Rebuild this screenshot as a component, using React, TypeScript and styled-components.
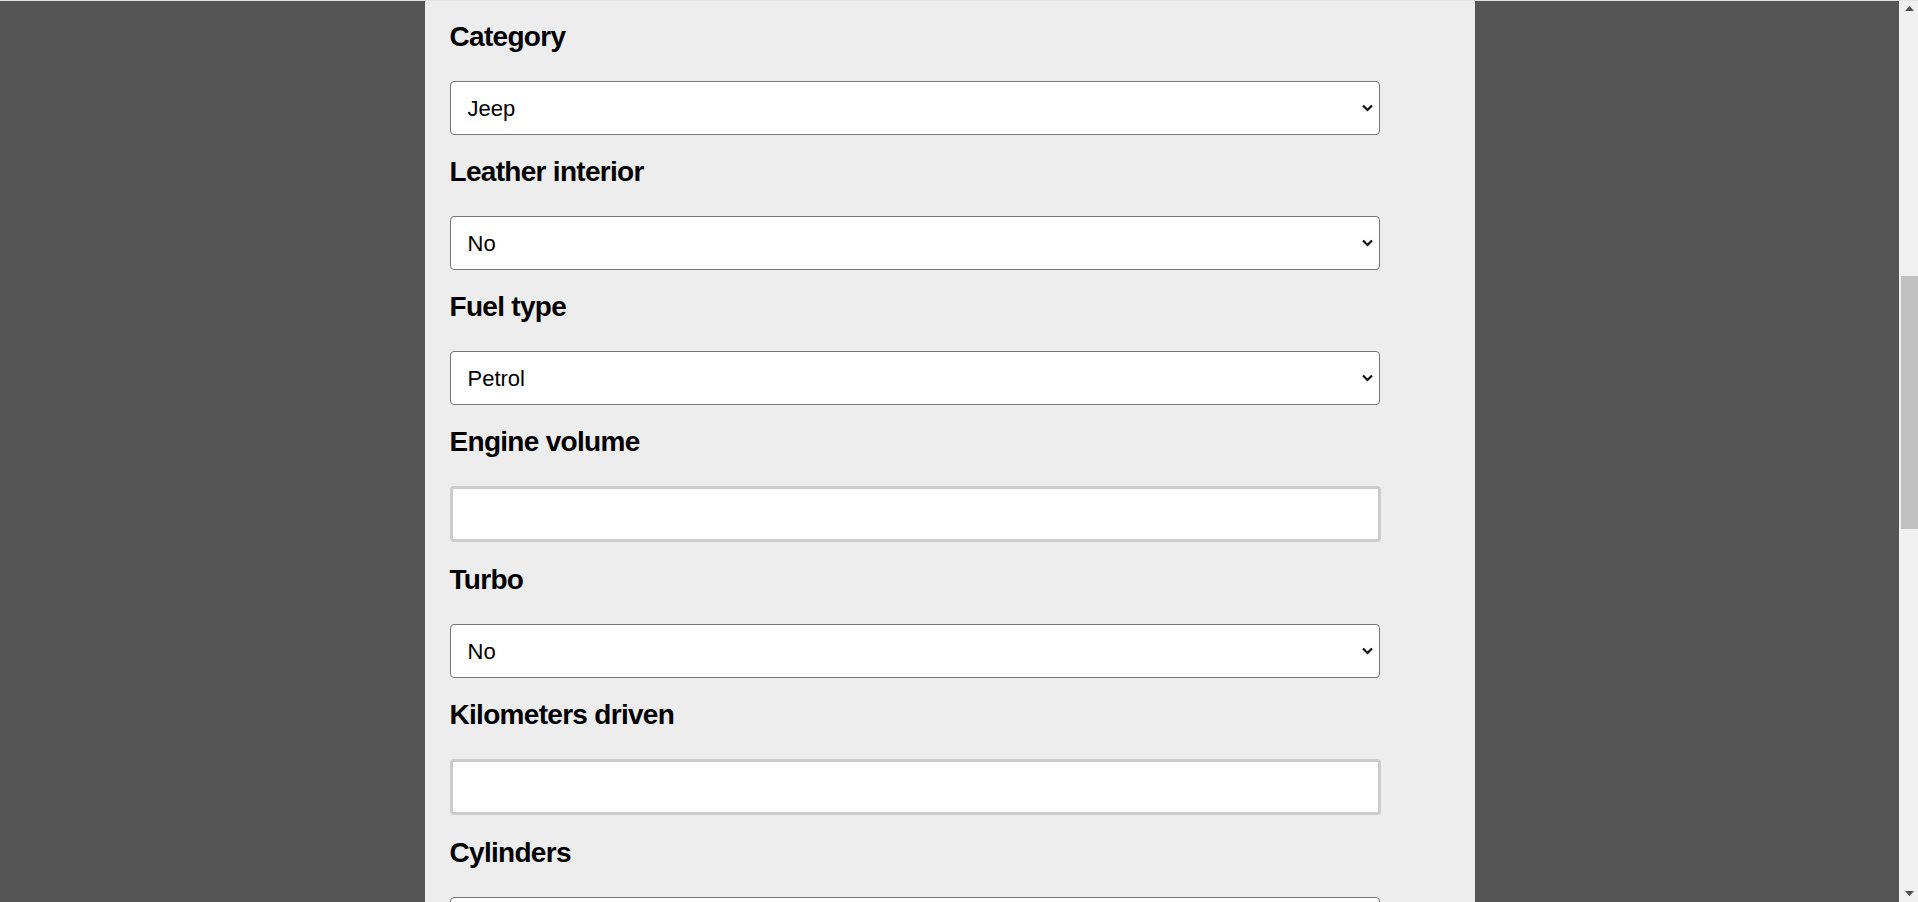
import React, { useEffect, useRef } from 'react';
import styled, { createGlobalStyle } from 'styled-components';

// Car price form, page is scrolled down to the "Category" field

const BAR = 19;

const GlobalStyle = createGlobalStyle`
    html, body {
        margin: 0;
        padding: 0;
        background-color: #555555;
        font-family: "Liberation Sans", Arial, sans-serif;
    }
`;

const Page = styled.div`
    min-height: 100vh;
    padding-right: ${BAR}px;
    background-color: #555555;
`;

const TopEdge = styled.div`
    position: fixed;
    top: 0;
    left: 0;
    right: 0;
    height: 1px;
    background-color: #e3e3e3;
    z-index: 11;
`;

const Panel = styled.form`
    width: 1050px;
    box-sizing: border-box;
    margin: 0 auto;
    padding: 0 25px 240px;
    background-color: #ededed;
`;

const Header = styled.div`
    padding: 48px 0 225px;
`;

const Title = styled.h1`
    margin: 0 0 20px;
    font-size: 40px;
    line-height: 48px;
    color: #111;
`;

const Intro = styled.p`
    margin: 0;
    font-size: 20px;
    line-height: 30px;
    color: #333;
`;

const Field = styled.div`
    display: flex;
    flex-direction: column;
    align-items: flex-start;
`;

const Label = styled.label`
    display: block;
    margin: 21px 0 28px;
    font-family: "Liberation Sans", Arial, sans-serif;
    font-size: 28px;
    line-height: 32px;
    font-weight: 700;
    letter-spacing: -0.7px;
    color: #000;
`;

const SelectWrap = styled.div`
    position: relative;
    width: 930px;
    height: 54px;
`;

const Select = styled.select`
    display: block;
    width: 100%;
    height: 100%;
    box-sizing: border-box;
    padding: 0 36px 0 17px;
    font-family: "Liberation Sans", Arial, sans-serif;
    font-size: 22px;
    color: #000;
    background-color: #fff;
    border: 1px solid #767676;
    border-radius: 4px;
    appearance: none;
    -webkit-appearance: none;
    outline: none;
`;

const Chevron = styled.svg`
    position: absolute;
    right: 7px;
    top: 23px;
    width: 11px;
    height: 8px;
    pointer-events: none;
`;

const Input = styled.input`
    display: block;
    width: 931px;
    height: 56px;
    box-sizing: border-box;
    margin: 0 0 1px;
    padding: 0 14px;
    font-family: "Liberation Sans", Arial, sans-serif;
    font-size: 22px;
    background-color: #fff;
    border: 3px solid #cccccc;
    border-radius: 4px;
    outline: none;
`;

const Submit = styled.button`
    margin-top: 40px;
    width: 930px;
    height: 60px;
    font-family: "Liberation Sans", Arial, sans-serif;
    font-size: 24px;
    font-weight: 700;
    color: #fff;
    background-color: #333;
    border: none;
    border-radius: 4px;
`;

const Result = styled.div`
    margin-top: 30px;
    height: 40px;
    font-size: 24px;
    line-height: 40px;
    color: #222;
`;

/* window scrollbar, drawn over the right edge */
const ScrollBar = styled.div`
    position: fixed;
    top: 0;
    right: 0;
    width: ${BAR}px;
    height: 100vh;
    display: flex;
    flex-direction: column;
    background-color: #f1f1f1;
    z-index: 10;
`;

const ArrowButton = styled.div`
    height: 17px;
    flex: none;
    display: flex;
    align-items: center;
    justify-content: center;
    padding-left: 2px;
`;

const Track = styled.div`
    flex: 1;
    padding-left: 2px;
`;

const Thumb = styled.div`
    background-color: #c1c1c1;
`;

type FieldDef = {
    label: string;
    options?: string[];
    value?: string;
};

const before: FieldDef[] = [
    { label: "Levy" },
    { label: "Manufacturer", options: ["Toyota", "Hyundai", "Mercedes-Benz", "Lexus", "Ford", "Chevrolet", "BMW"], value: "Toyota" },
    { label: "Model" },
    { label: "Production year" },
];

const after: FieldDef[] = [
    { label: "Category", options: ["Jeep", "Sedan", "Hatchback", "Minivan", "Coupe", "Universal", "Microbus", "Goods wagon", "Pickup", "Cabriolet", "Limousine"], value: "Jeep" },
    { label: "Leather interior", options: ["Yes", "No"], value: "No" },
    { label: "Fuel type", options: ["Petrol", "Diesel", "Hybrid", "LPG", "CNG", "Plug-in Hybrid", "Hydrogen"], value: "Petrol" },
    { label: "Engine volume" },
    { label: "Turbo", options: ["Yes", "No"], value: "No" },
    { label: "Kilometers driven" },
    { label: "Cylinders", options: ["4", "6", "8", "12"], value: "4" },
    { label: "Gear box type", options: ["Automatic", "Tiptronic", "Manual", "Variator"], value: "Automatic" },
    { label: "Drive wheels", options: ["Front", "Rear", "4x4"], value: "Front" },
    { label: "Doors", options: ["2-3", "4-5", ">5"], value: "4-5" },
    { label: "Wheel", options: ["Left wheel", "Right-hand drive"], value: "Left wheel" },
    { label: "Color", options: ["Black", "White", "Silver", "Grey", "Blue", "Red"], value: "Black" },
    { label: "Airbags" },
];

const renderField = (f: FieldDef, i: number, ref?: React.Ref<HTMLDivElement>) => {
    const id = "f-" + f.label.toLowerCase().replace(/\s+/g, "-");
    return (
        <Field key={f.label + i} ref={ref}>
            <Label htmlFor={id}>{f.label}</Label>
            {f.options ? (
                <SelectWrap>
                    <Select id={id} defaultValue={f.value}>
                        {f.options.map((o) => (
                            <option key={o} value={o}>{o}</option>
                        ))}
                    </Select>
                    <Chevron viewBox="0 0 11 8">
                        <polyline points="1,1.5 5.5,6 10,1.5" fill="none" stroke="#111" strokeWidth="2.2" />
                    </Chevron>
                </SelectWrap>
            ) : (
                <Input id={id} type="text" />
            )}
        </Field>
    );
};

const App = () => {
    const categoryRef = useRef<HTMLDivElement>(null);

    useEffect(() => {
        const el = categoryRef.current;
        if (el) {
            window.scrollTo(0, el.offsetTop);
        }
    }, []);

    return (
        <>
            <GlobalStyle />
            <TopEdge />
            <Page>
                <Panel onSubmit={(e) => e.preventDefault()}>
                    <Header>
                        <Title>Car Price Prediction</Title>
                        <Intro>Fill in the details of the car to get an estimated price.</Intro>
                    </Header>
                    {before.map((f, i) => renderField(f, i))}
                    {after.map((f, i) => renderField(f, i, i === 0 ? categoryRef : undefined))}
                    <Submit type="submit">Predict price</Submit>
                    <Result></Result>
                </Panel>
            </Page>
            <ScrollBar>
                <ArrowButton>
                    <svg width="9" height="5" viewBox="0 0 9 5">
                        <polygon points="0,5 4.5,0 9,5" fill="#505050" />
                    </svg>
                </ArrowButton>
                <Track>
                    <Thumb style={{ marginTop: 259, height: 253 }} />
                </Track>
                <ArrowButton>
                    <svg width="9" height="5" viewBox="0 0 9 5">
                        <polygon points="0,0 4.5,5 9,0" fill="#505050" />
                    </svg>
                </ArrowButton>
            </ScrollBar>
        </>
    );
};

export default App;
